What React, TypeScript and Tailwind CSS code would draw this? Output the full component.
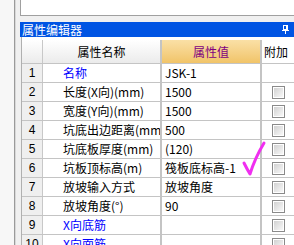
import React from 'react'

type Row = { name: string; value: string; group?: boolean; check?: boolean }

const rows: Row[] = [
  { name: '名称', value: 'JSK-1', group: true, check: false },
  { name: '长度(X向)(mm)', value: '1500' },
  { name: '宽度(Y向)(mm)', value: '1500' },
  { name: '坑底出边距离(mm)', value: '500' },
  { name: '坑底板厚度(mm)', value: '(120)' },
  { name: '坑板顶标高(m)', value: '筏板底标高-1' },
  { name: '放坡输入方式', value: '放坡角度' },
  { name: '放坡角度(°)', value: '90' },
  { name: 'X向底筋', value: '', group: true },
  { name: 'X向面筋', value: '', group: true },
]

function CheckBox() {
  return (
    <div className="w-[13px] h-[13px] border border-[#8a8a8a] p-px bg-white">
      <div className="w-full h-full bg-linear-to-br from-[#d2d2d2] to-[#f8f8f8]" />
    </div>
  )
}

function PinIcon() {
  return (
    <svg width="8" height="9" viewBox="0 0 8 9" shapeRendering="crispEdges">
      <rect x="1.5" y="0.5" width="4" height="4" fill="none" stroke="white" strokeWidth="1" />
      <rect x="4" y="1" width="1" height="4" fill="white" />
      <rect x="0" y="5" width="7" height="1" fill="white" />
      <rect x="3" y="6" width="1" height="3" fill="white" />
    </svg>
  )
}

export default function App() {
  return (
    <div className="relative w-[294px] h-[245px] overflow-hidden bg-[#f0f0f0] flex font-['Noto_Sans_CJK_SC',sans-serif] text-[12px] leading-none text-black">
      {/* left edge */}
      <div className="w-[14px] shrink-0 bg-[#f7f7f7]" />
      <div className="w-px shrink-0 bg-[#9a9a9a]" />
      <div className="w-px shrink-0 bg-[#d8d8d8]" />
      <div className="w-[4px] shrink-0" />

      <div className="flex-1 flex flex-col min-w-0">
        {/* panel above */}
        <div className="h-[16px] shrink-0 bg-white border-l border-b border-[#a0a0a0]" />
        <div className="h-[6px] shrink-0" />

        {/* title bar */}
        <div className="h-[15px] shrink-0 bg-[#0054e3] text-white flex items-center pl-[2px] pr-[4px]">
          <span className="flex-1">属性编辑器</span>
          <PinIcon />
        </div>

        {/* grid */}
        <div className="flex-1 flex flex-col ml-px border-l border-[#b0b0b0] bg-white">
          <div className="h-[27px] shrink-0 pt-[3px] flex border-b border-[#c4c4c4] bg-white">
            <div className="w-[21px] shrink-0 border-r border-[#c8c8c8] bg-linear-to-b from-white to-[#ebebeb]" />
            <div className="w-[119px] shrink-0 border-r-2 border-[#c4c4c4] bg-linear-to-b from-white to-[#ebebeb] flex items-center justify-center">
              属性名称
            </div>
            <div className="w-[100px] shrink-0 border-r-2 border-[#c4c4c4] bg-linear-to-b from-[#fae0a6] to-[#f1c468] text-[#800080] flex items-center justify-center">
              属性值
            </div>
            <div className="flex-1 flex items-center pl-[2px] whitespace-nowrap">附加</div>
          </div>

          {rows.map((r, i) => (
            <div key={i} className="h-[19px] shrink-0 flex border-b border-[#c4c4c4]">
              <div className="w-[21px] shrink-0 border-r border-[#c8c8c8] bg-[#efefef] flex items-center justify-center font-['Liberation_Sans',sans-serif] text-[12px]">
                {i + 1}
              </div>
              <div
                className={`w-[119px] shrink-0 border-r-2 border-[#c4c4c4] flex items-center pl-[20px] whitespace-nowrap overflow-hidden ${
                  r.group ? 'text-[#0000ff]' : ''
                }`}
              >
                {r.name}
              </div>
              <div className="w-[100px] shrink-0 border-r-2 border-[#c4c4c4] flex items-center pl-[3px] whitespace-nowrap overflow-hidden">
                {r.value}
              </div>
              <div className="flex-1 flex items-center pl-[10px]">{r.check !== false && <CheckBox />}</div>
            </div>
          ))}
        </div>
      </div>

      {/* hand-drawn tick over the grid */}
      <svg className="absolute left-0 top-0 pointer-events-none" width="294" height="245">
        <path
          d="M244 163 Q247 169 250 174 Q255 158 264 143"
          fill="none"
          stroke="#f02ff0"
          strokeWidth="3"
          strokeLinecap="round"
          strokeLinejoin="round"
        />
      </svg>
    </div>
  )
}
